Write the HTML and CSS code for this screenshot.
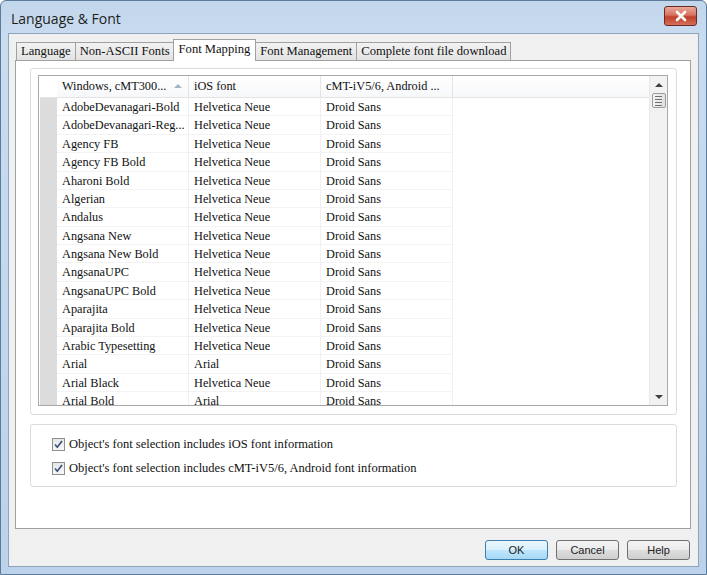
FILE: index.html
```html
<html><head>
  <title>Language &amp; Font</title>
  <link rel="stylesheet" href="styles.css">
</head>
<body>
  <div class="window">
    <div class="titlebar">
      <span class="title">Language &amp; Font</span>
      <button class="close-button">
        <svg width="14" height="12" viewBox="0 0 14 12"><path d="M3 2 L11 10 M11 2 L3 10" stroke="white" stroke-width="2.6" stroke-linecap="round"/></svg>
      </button>
    </div>

    <div class="client">
      <div class="tabs">
        <div class="tab">Language</div>
        <div class="tab">Non-ASCII Fonts</div>
        <div class="tab active">Font Mapping</div>
        <div class="tab">Font Management</div>
        <div class="tab">Complete font file download</div>
      </div>

      <div class="panel">
        <div class="group list-group">
          <div class="listview">
            <div class="list-main">
              <div class="list-header">
                <div class="gutter"></div>
                <div class="col">Windows, cMT300... <span class="sort-arrow"></span></div>
                <div class="col">iOS font</div>
                <div class="col">cMT-iV5/6, Android ...</div>
                <div class="filler"></div>
              </div>
              <div class="list-body">
                <div class="row"><div class="gutter"></div><div class="col">AdobeDevanagari-Bold</div><div class="col">Helvetica Neue</div><div class="col">Droid Sans</div></div>
                <div class="row"><div class="gutter"></div><div class="col">AdobeDevanagari-Reg...</div><div class="col">Helvetica Neue</div><div class="col">Droid Sans</div></div>
                <div class="row"><div class="gutter"></div><div class="col">Agency FB</div><div class="col">Helvetica Neue</div><div class="col">Droid Sans</div></div>
                <div class="row"><div class="gutter"></div><div class="col">Agency FB Bold</div><div class="col">Helvetica Neue</div><div class="col">Droid Sans</div></div>
                <div class="row"><div class="gutter"></div><div class="col">Aharoni Bold</div><div class="col">Helvetica Neue</div><div class="col">Droid Sans</div></div>
                <div class="row"><div class="gutter"></div><div class="col">Algerian</div><div class="col">Helvetica Neue</div><div class="col">Droid Sans</div></div>
                <div class="row"><div class="gutter"></div><div class="col">Andalus</div><div class="col">Helvetica Neue</div><div class="col">Droid Sans</div></div>
                <div class="row"><div class="gutter"></div><div class="col">Angsana New</div><div class="col">Helvetica Neue</div><div class="col">Droid Sans</div></div>
                <div class="row"><div class="gutter"></div><div class="col">Angsana New Bold</div><div class="col">Helvetica Neue</div><div class="col">Droid Sans</div></div>
                <div class="row"><div class="gutter"></div><div class="col">AngsanaUPC</div><div class="col">Helvetica Neue</div><div class="col">Droid Sans</div></div>
                <div class="row"><div class="gutter"></div><div class="col">AngsanaUPC Bold</div><div class="col">Helvetica Neue</div><div class="col">Droid Sans</div></div>
                <div class="row"><div class="gutter"></div><div class="col">Aparajita</div><div class="col">Helvetica Neue</div><div class="col">Droid Sans</div></div>
                <div class="row"><div class="gutter"></div><div class="col">Aparajita Bold</div><div class="col">Helvetica Neue</div><div class="col">Droid Sans</div></div>
                <div class="row"><div class="gutter"></div><div class="col">Arabic Typesetting</div><div class="col">Helvetica Neue</div><div class="col">Droid Sans</div></div>
                <div class="row"><div class="gutter"></div><div class="col">Arial</div><div class="col">Arial</div><div class="col">Droid Sans</div></div>
                <div class="row"><div class="gutter"></div><div class="col">Arial Black</div><div class="col">Helvetica Neue</div><div class="col">Droid Sans</div></div>
                <div class="row"><div class="gutter"></div><div class="col">Arial Bold</div><div class="col">Arial</div><div class="col">Droid Sans</div></div>
              </div>
            </div>
            <div class="scrollbar">
              <div class="arrow up"></div>
              <div class="thumb"><span></span><span></span><span></span><span></span></div>
              <div class="track"></div>
              <div class="arrow down"></div>
            </div>
          </div>
        </div>

        <div class="group options">
          <label class="check"><span class="box"><svg width="11" height="11" viewBox="0 0 11 11"><path d="M2 5.5 L4.3 8.3 L9 2" fill="none" stroke="#3a4f7a" stroke-width="1.6"/></svg></span>Object's font selection includes iOS font information</label>
          <label class="check"><span class="box"><svg width="11" height="11" viewBox="0 0 11 11"><path d="M2 5.5 L4.3 8.3 L9 2" fill="none" stroke="#3a4f7a" stroke-width="1.6"/></svg></span>Object's font selection includes cMT-iV5/6, Android font information</label>
        </div>
      </div>

      <div class="buttons">
        <button class="btn default">OK</button>
        <button class="btn">Cancel</button>
        <button class="btn">Help</button>
      </div>
    </div>
  </div>
</body></html>
```

FILE: styles.css
```css
body {
  margin: 0;
  background: #ffffff;
}

.window {
  width: 707px;
  height: 575px;
  box-sizing: border-box;
  background: linear-gradient(to bottom, #c2d6ec 0px, #c9dcf0 40px, #bcd2ea 100%);
  border: 1px solid #5c7a99;
  border-radius: 6px 6px 0 0;
  display: flex;
  flex-direction: column;
}

.titlebar {
  height: 32px;
  display: flex;
  align-items: center;
  justify-content: space-between;
  padding: 0 9px 0 10px;
}

.title {
  font-family: "Open Sans", sans-serif;
  font-size: 14px;
  color: #1e1e1e;
  margin-top: 2px;
}

.close-button {
  width: 33px;
  height: 20px;
  margin-top: -3px;
  border: 1px solid #6b2a22;
  border-radius: 3px;
  background: linear-gradient(to bottom, #e9a99c 0%, #d6735f 45%, #c0402a 55%, #d4705a 100%);
  display: flex;
  align-items: center;
  justify-content: center;
  padding: 0;
}

.client {
  flex: 1;
  margin: 0 7px 7px 7px;
  background: #f0f0f0;
  border: 1px solid #8ea4bc;
  display: flex;
  flex-direction: column;
  padding: 6px 7px 0 6px;
}

/* tabs */
.tabs {
  display: flex;
  align-items: flex-end;
  height: 20px;
  padding-left: 1px;
  font-family: "Liberation Serif", serif;
  font-size: 12.6px;
}

.tab {
  height: 17px;
  line-height: 17px;
  padding: 0 4px;
  border: 1px solid #a0a0a0;
  border-bottom: none;
  margin-right: -1px;
  background: linear-gradient(to bottom, #f2f2f2, #e3e3e3);
  color: #111;
}

.tab.active {
  height: 21px;
  line-height: 19px;
  padding: 0 5px;
  margin: 0 -1px 0 -1px;
  background: #ffffff;
  position: relative;
  z-index: 1;
  margin-bottom: -1px;
  border-color: #a0a0a0;
}

.panel {
  flex: 0 0 auto;
  height: 469px;
  box-sizing: border-box;
  background: #ffffff;
  border: 1px solid #a0a0a0;
  padding: 7px 13px 0 14px;
  display: flex;
  flex-direction: column;
  gap: 9px;
}

.group {
  border: 1px solid #dcdcdc;
  border-radius: 3px;
}

.list-group {
  height: 347px;
  box-sizing: border-box;
  padding: 6px 8px 8px 7px;
}

.listview {
  height: 100%;
  box-sizing: border-box;
  border: 1px solid #a9a9a9;
  display: flex;
  font-family: "Liberation Serif", serif;
  font-size: 12.3px;
  color: #111;
  overflow: hidden;
}

.list-main {
  flex: 1;
  display: flex;
  flex-direction: column;
  overflow: hidden;
  padding-left: 1px;
}

.list-header {
  height: 21px;
  flex: 0 0 21px;
  display: flex;
  border-bottom: 1px solid #e2e4e8;
  background: linear-gradient(to bottom, #ffffff, #f7f8fa);
}

.list-header .col {
  height: 21px;
  line-height: 21px;
  border-right: 1px solid #e3e5e9;
}

.gutter {
  width: 17px;
  flex: 0 0 17px;
}

.list-header .gutter {
  background: #ffffff;
}

.col {
  width: 126px;
  flex: 0 0 126px;
  padding-left: 5px;
  white-space: nowrap;
  overflow: hidden;
}

.sort-arrow {
  display: inline-block;
  width: 0;
  height: 0;
  margin-left: 5px;
  vertical-align: 2px;
  border-left: 4px solid transparent;
  border-right: 4px solid transparent;
  border-bottom: 4px solid #9fb7c9;
}

.list-body {
  flex: 1;
  overflow: hidden;
}

.row {
  display: flex;
  height: 18.375px;
  line-height: 18px;
}

.row .gutter {
  background: #dcdcdc;
}

.row .col {
  border-right: 1px solid #f0f0f0;
  border-bottom: 1px solid #f3f3f3;
  box-sizing: content-box;
  height: 17.375px;
}

/* scrollbar */
.scrollbar {
  width: 17px;
  flex: 0 0 17px;
  background: #f2f2f2;
  border-left: 1px solid #e8e8e8;
  display: flex;
  flex-direction: column;
  align-items: center;
}

.arrow {
  height: 17px;
  width: 17px;
  display: flex;
  align-items: center;
  justify-content: center;
}

.arrow::after {
  content: "";
  border-left: 4px solid transparent;
  border-right: 4px solid transparent;
}

.arrow.up::after {
  border-bottom: 4px solid #404040;
}

.arrow.down::after {
  border-top: 4px solid #404040;
}

.thumb {
  width: 14px;
  height: 15px;
  box-sizing: border-box;
  border: 1px solid #9c9c9c;
  border-radius: 2px;
  background: linear-gradient(to right, #f4f4f4, #e0e0e0);
  display: flex;
  flex-direction: column;
  align-items: center;
  justify-content: center;
  gap: 2px;
}

.thumb span {
  display: block;
  width: 7px;
  height: 1px;
  background: #707070;
}

.track {
  flex: 1;
}

/* options */
.options {
  height: 63px;
  box-sizing: border-box;
  padding: 12px 0 0 21px;
  display: flex;
  flex-direction: column;
  gap: 10px;
  font-family: "Liberation Serif", serif;
  font-size: 12.5px;
  color: #111;
}

.check {
  display: flex;
  align-items: center;
  height: 14px;
}

.box {
  width: 11px;
  height: 11px;
  border: 1px solid #8f8f8f;
  background: linear-gradient(to bottom, #e6e6e6, #f8f8f8);
  margin-right: 4px;
  display: flex;
}

/* footer */
.buttons {
  display: flex;
  justify-content: flex-end;
  gap: 8px;
  padding-top: 11px;
  padding-right: 1px;
}

.btn {
  width: 63px;
  height: 20px;
  border: 1px solid #707070;
  border-radius: 3px;
  background: linear-gradient(to bottom, #f4f4f4 0%, #ebebeb 50%, #dddddd 51%, #cfcfcf 100%);
  font-family: "Liberation Sans", sans-serif;
  font-size: 11px;
  color: #222;
  padding: 0;
}

.btn.default {
  border-color: #3c7fb1;
  background: linear-gradient(to bottom, #eaf6fd 0%, #d9f0fc 50%, #bee6fd 51%, #a7d9f5 100%);
}
```
